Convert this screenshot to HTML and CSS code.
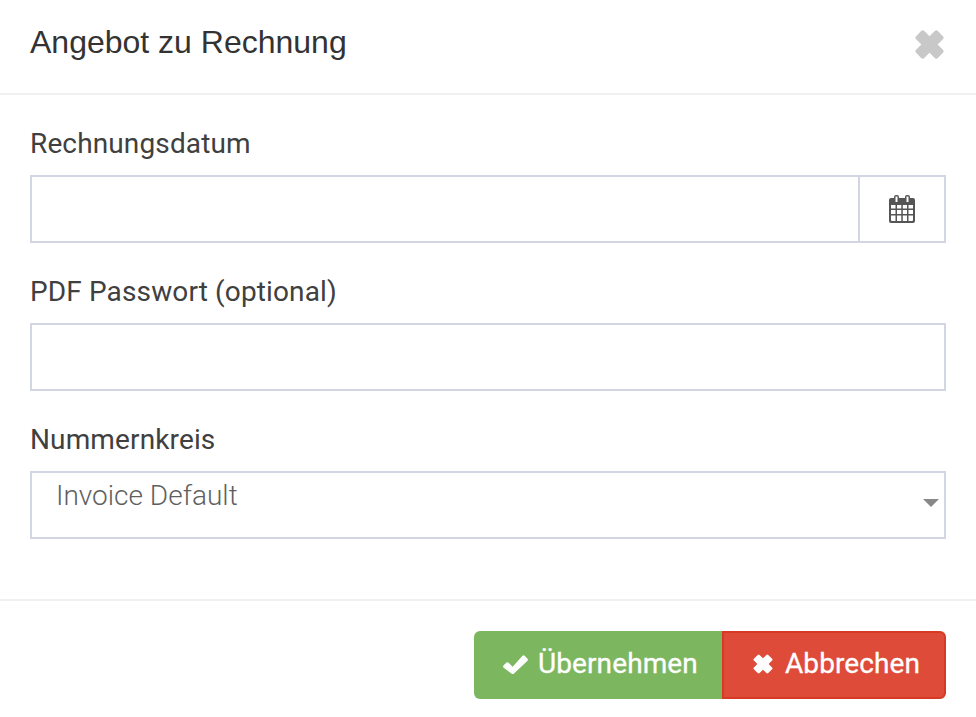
FILE: index.html
```html
<!DOCTYPE html>
<html lang="de">
<head>
    <meta charset="UTF-8">
    <title>Angebot zu Rechnung</title>
    <link rel="stylesheet" href="styles.css">
</head>
<body>
    <div class="modal_wrap">
        <div class="modal_header">
            <h4>Angebot zu Rechnung</h4>
            <a href="javascript:void(0)" class="close" aria-label="close">
                <svg viewBox="2 2 26 26" width="29" height="29"><path d="M3 7.500 7.500 3a2 2 0 0 1 2.800 0L15 7.700 19.700 3a2 2 0 0 1 2.800 0L27 7.500a2 2 0 0 1 0 2.800L22.300 15 27 19.700a2 2 0 0 1 0 2.800L22.500 27a2 2 0 0 1-2.800 0L15 22.300 10.300 27a2 2 0 0 1-2.800 0L3 22.500a2 2 0 0 1 0-2.800L7.700 15 3 10.300a2 2 0 0 1 0-2.800z"/></svg>
            </a>
        </div>
        <div class="modal_body">
            <div class="form_group">
                <label>Rechnungsdatum</label>
                <div class="input_group">
                    <input type="text" class="form_input">
                    <span class="input_addon">
                        <svg viewBox="0 0 26 28" width="26" height="28">
                            <path fill-rule="evenodd" d="M2 3h3V2a2 2 0 0 1 2-2h1a2 2 0 0 1 2 2v1h6V2a2 2 0 0 1 2-2h1a2 2 0 0 1 2 2v1h3a2 2 0 0 1 2 2v21a2 2 0 0 1-2 2H2a2 2 0 0 1-2-2V5a2 2 0 0 1 2-2zM6.500 1.500V7h2V1.500zM17.500 1.500V7h2V1.500zM2 10v3.500h4.500V10zM8 10v3.500h4.300V10zM13.800 10v3.500H18V10zM19.500 10v3.500H24V10zM2 15v4h4.500v-4zM8 15v4h4.300v-4zM13.800 15v4H18v-4zM19.500 15v4H24v-4zM2 20.500V25a1 1 0 0 0 1 1h3.500v-5.500zM8 20.500V26h4.300v-5.500zM13.800 20.500V26H18v-5.500zM19.500 20.500V26H23a1 1 0 0 0 1-1v-4.500z"/>
                        </svg>
                    </span>
                </div>
            </div>
            <div class="form_group">
                <label>PDF Passwort (optional)</label>
                <input type="text" class="form_input">
            </div>
            <div class="form_group">
                <label>Nummernkreis</label>
                <div class="select_box">
                    <span>Invoice Default</span>
                    <i class="select_arrow"></i>
                </div>
            </div>
        </div>
        <div class="modal_footer">
            <div class="btn_wrap">
                <a href="javascript:void(0)" class="btn btn_ok">
                    <svg viewBox="0 0 26 20" width="25" height="19"><path d="M1 11.200 3.600 8.600a1.300 1.300 0 0 1 1.800 0L10 13.200 20.600 1.400a1.300 1.300 0 0 1 1.800 0L25 4a1.300 1.300 0 0 1 0 1.800L11 19a1.300 1.300 0 0 1-1.900 0L1 13a1.300 1.300 0 0 1 0-1.800z"/></svg>
                    Übernehmen
                </a>
                <a href="javascript:void(0)" class="btn btn_cancel">
                    <svg viewBox="0 0 22 22" width="20" height="20"><path d="M1 5.200 5.200 1a1.400 1.400 0 0 1 2 0L11 4.800 14.800 1a1.400 1.400 0 0 1 2 0L21 5.200a1.400 1.400 0 0 1 0 2L17.200 11 21 14.800a1.400 1.400 0 0 1 0 2L16.800 21a1.400 1.400 0 0 1-2 0L11 17.200 7.200 21a1.400 1.400 0 0 1-2 0L1 16.800a1.400 1.400 0 0 1 0-2L4.800 11 1 7.200a1.400 1.400 0 0 1 0-2z"/></svg>
                    Abbrechen
                </a>
            </div>
        </div>
    </div>
</body>
</html>
```

FILE: styles.css
```css
* {
    box-sizing: border-box;
}

body {
    margin: 0;
    background-color: #fff;
    color: #333;
    font-family: Roboto, "Liberation Sans", sans-serif;
}

.modal_header {
    display: flex;
    justify-content: space-between;
    align-items: center;
    height: 95px;
    padding: 0 32px 9px 30px;
    border-bottom: 2px solid #f0f0f0;
}

.modal_header h4 {
    margin: 0;
    font-family: "Liberation Sans", sans-serif;
    font-size: 32px;
    font-weight: 400;
    line-height: 1.4;
}

.close {
    display: block;
    height: 29px;
    margin-top: 4px;
}

.close svg {
    display: block;
    fill: #c8c8c8;
}

.modal_body {
    height: 504px;
    padding: 31px 30px 0;
}

.form_group {
    margin-bottom: 31px;
}

.form_group label {
    display: block;
    height: 49px;
    color: #404040;
    font-size: 28px;
    line-height: 36px;
    letter-spacing: .13px;
}

.form_input {
    display: block;
    width: 100%;
    height: 68px;
    border: 2px solid #d2d6e3;
    border-radius: 0;
    outline: none;
    background-color: #fff;
}

.input_group {
    display: flex;
}

.input_group .form_input {
    flex: 1;
}

.input_addon {
    display: flex;
    justify-content: center;
    align-items: center;
    width: 86px;
    height: 68px;
    border: 2px solid #d2d6e3;
    border-left: 0;
}

.input_addon svg {
    fill: #555;
}

.select_box {
    position: relative;
    height: 68px;
    padding-left: 24px;
    border: 2px solid #d2d6e3;
    color: #5f5f5f;
    font-size: 28px;
    font-weight: 300;
    line-height: 46px;
}

.select_arrow {
    position: absolute;
    top: 26px;
    right: 5px;
    border-top: 8px solid #888;
    border-left: 8px solid transparent;
    border-right: 8px solid transparent;
}

.modal_footer {
    padding: 30px;
    border-top: 2px solid #f0f0f0;
}

.btn_wrap {
    display: flex;
    justify-content: flex-end;
}

.btn {
    display: flex;
    align-items: center;
    height: 68px;
    padding-bottom: 4px;
    color: #fff;
    font-size: 28px;
    font-weight: 400;
    letter-spacing: .1px;
    -webkit-text-stroke: .3px #fff;
    text-decoration: none;
}

.btn svg {
    margin-top: 2px;
    fill: #fff;
}

.btn_ok svg {
    stroke: #fff;
    stroke-width: 1.2;
}

.btn_ok {
    gap: 10px;
    width: 248px;
    padding-left: 29px;
    background-color: #7cb65f;
    border-radius: 6px 0 0 6px;
}

.btn_cancel {
    gap: 12px;
    width: 224px;
    padding-left: 29px;
    background-color: #de4b39;
    border: 2px solid #d73925;
    border-radius: 0 6px 6px 0;
}
```
